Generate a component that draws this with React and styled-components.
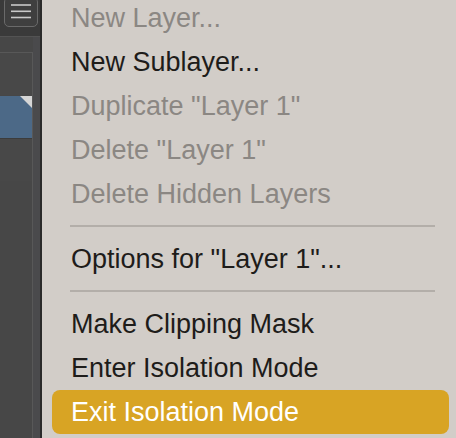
import React from "react";
import styled, { createGlobalStyle } from "styled-components";

const Global = createGlobalStyle`
  html, body { margin: 0; padding: 0; }
  body { width: 456px; height: 438px; overflow: hidden; background: #d2cdc8; }
  #root { width: 456px; height: 438px; }
`;

const Screen = styled.div`
  display: flex;
  width: 456px;
  height: 438px;
  overflow: hidden;
  font-family: "Liberation Sans", Arial, sans-serif;
`;

const LeftPanel = styled.div`
  width: 40px;
  flex: none;
  display: flex;
  flex-direction: column;
  background: #474747;
  border-right: 2px solid #2a2a2a;
`;

const PanelHeader = styled.div`
  height: 37px;
  flex: none;
  background: #3a3a3a;
  border-bottom: 1px solid #535353;
  box-sizing: border-box;
  display: flex;
  justify-content: flex-end;
  align-items: flex-start;
  padding-right: 2px;
`;

const MenuButton = styled.div`
  width: 34px;
  height: 30px;
  margin-top: -3px;
  box-sizing: border-box;
  border: 1.5px solid #6a6a6a;
  border-radius: 5px;
  background: #3f3f3f;
  display: flex;
  align-items: flex-start;
  justify-content: center;
  padding-top: 6px;
`;

const PanelBody = styled.div`
  flex: 1;
  display: flex;
`;

const LayerColumn = styled.div`
  width: 33px;
  flex: none;
  padding-top: 15px;
  box-sizing: border-box;
`;

const LayerList = styled.div`
  border-top: 1px solid #585858;
  border-right: 1px solid #585858;
  height: 100%;
  box-sizing: border-box;
`;

const LayerRow = styled.div`
  position: relative;
  height: 42px;
  background: ${(p) => (p.$selected ? "#4c6987" : "#484848")};
  border-bottom: 1px solid ${(p) => (p.$selected ? "#3c3c3c" : "#474747")};
`;

const Corner = styled.div`
  position: absolute;
  top: 0;
  right: 0;
  width: 0;
  height: 0;
  border-top: 12px solid #d6d6d6;
  border-left: 12px solid transparent;
`;

const ScrollStrip = styled.div`
  width: 7px;
  flex: none;
  background: #4a4a4c;
`;

const Menu = styled.div`
  flex: 1;
  background: #d2cdc8;
  padding: 0 7px 0 10px;
  margin-top: -4px;
  display: flex;
  flex-direction: column;
`;

const Item = styled.div`
  height: 44px;
  line-height: 44px;
  padding-left: 19px;
  font-size: 27px;
  white-space: nowrap;
  border-radius: 8px;
  color: ${(p) =>
    p.$active ? "#ffffff" : p.$disabled ? "#8b8783" : "#1e1c1a"};
  background: ${(p) => (p.$active ? "#d8a424" : "transparent")};
`;

const Separator = styled.div`
  height: 21px;
  display: flex;
  align-items: flex-start;
  padding: 0 14px 0 18px;
  &::after {
    content: "";
    display: block;
    margin-top: 9px;
    height: 2px;
    flex: 1;
    background: #b3aea9;
  }
`;

function Hamburger() {
  return (
    <svg width="22" height="16" viewBox="0 0 22 16">
      <g stroke="#c9c9c9" strokeWidth="1.6" strokeLinecap="butt">
        <line x1="1" y1="1" x2="21" y2="1" />
        <line x1="1" y1="7.3" x2="21" y2="7.3" />
        <line x1="1" y1="13.5" x2="21" y2="13.5" />
      </g>
    </svg>
  );
}

const items = [
  { label: "New Layer...", disabled: true },
  { label: "New Sublayer..." },
  { label: 'Duplicate "Layer 1"', disabled: true },
  { label: 'Delete "Layer 1"', disabled: true },
  { label: "Delete Hidden Layers", disabled: true },
  { sep: true },
  { label: 'Options for "Layer 1"...' },
  { sep: true },
  { label: "Make Clipping Mask" },
  { label: "Enter Isolation Mode" },
  { label: "Exit Isolation Mode", active: true },
];

export default function App() {
  return (
    <>
      <Global />
      <Screen>
        <LeftPanel>
          <PanelHeader>
            <MenuButton>
              <Hamburger />
            </MenuButton>
          </PanelHeader>
          <PanelBody>
            <LayerColumn>
              <LayerList>
                <LayerRow />
                <LayerRow $selected>
                  <Corner />
                </LayerRow>
                <LayerRow />
              </LayerList>
            </LayerColumn>
            <ScrollStrip />
          </PanelBody>
        </LeftPanel>
        <Menu>
          {items.map((it, i) =>
            it.sep ? (
              <Separator key={i} />
            ) : (
              <Item key={i} $disabled={it.disabled} $active={it.active}>
                {it.label}
              </Item>
            )
          )}
        </Menu>
      </Screen>
    </>
  );
}
